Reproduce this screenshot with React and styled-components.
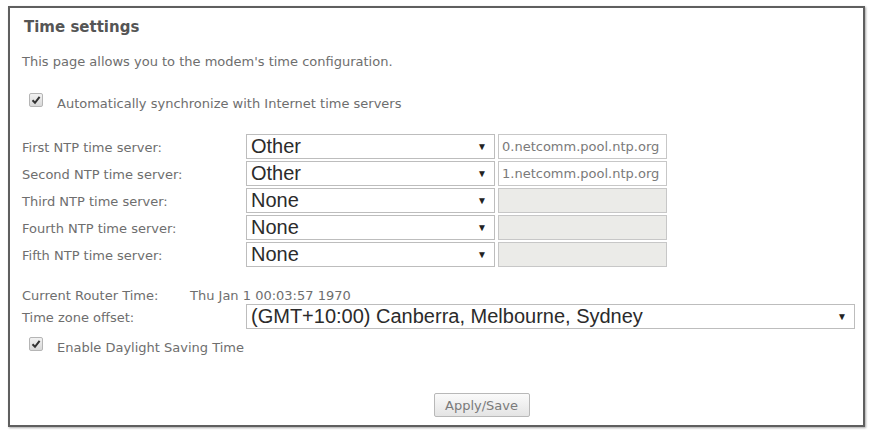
import styled, { createGlobalStyle } from 'styled-components';

const Global = createGlobalStyle`
  html, body { margin: 0; padding: 0; background: #fff; }
  body { font-family: Tahoma, "DejaVu Sans", sans-serif; }
`;

const Page = styled.div`
  width: 870px;
  height: 431px;
  padding: 6px 5px 4px 8px;
  box-sizing: border-box;
`;

const Frame = styled.div`
  height: 100%;
  box-sizing: border-box;
  border: 2px solid #5f5f5f;
  box-shadow: 1px 1px 2px rgba(0, 0, 0, 0.35);
  padding: 10px 8px 0 12px;
  display: flex;
  flex-direction: column;
  color: #6e6e6e;
  font-size: 13px;
`;

const Title = styled.div`
  font-weight: bold;
  font-size: 15px;
  color: #555;
  margin-left: 2px;
`;

const Desc = styled.div`
  margin-top: 18px;
`;

const CheckRow = styled.label`
  display: flex;
  align-items: center;
  gap: 14px;
  margin-left: 7px;
  margin-top: ${({ $top }) => $top}px;
`;

const Box = styled.span`
  width: 12px;
  height: 12px;
  border: 1px solid #b5b5b5;
  border-radius: 2px;
  background: linear-gradient(#f2f2f2, #d8d8d8);
  display: flex;
  align-items: center;
  justify-content: center;
  margin-top: -7px;
`;

const Servers = styled.div`
  margin-top: 23px;
  display: flex;
  flex-direction: column;
  gap: 2px;
`;

const Row = styled.div`
  display: grid;
  grid-template-columns: 221px 249px 169px;
  gap: 3px;
  align-items: center;
`;

const Label = styled.div`
  padding-top: 1px;
`;

const Select = styled.div`
  height: 25px;
  box-sizing: border-box;
  border: 1px solid #bdbdbd;
  background: #fff;
  display: flex;
  align-items: center;
  justify-content: space-between;
  padding: 0 7px 0 4px;
  font-family: "Liberation Sans", Arial, sans-serif;
  font-size: 20px;
  color: #2b2b2b;
`;

const Arrow = styled.span`
  font-size: 10px;
  color: #222;
`;

const TextBox = styled.div`
  height: 25px;
  box-sizing: border-box;
  border: 1px solid #c7c7c7;
  background: ${({ $disabled }) => ($disabled ? '#ebebe8' : '#fff')};
  display: flex;
  align-items: center;
  padding: 0 3px;
  font-size: 13px;
  color: #7a7a7a;
  white-space: nowrap;
  overflow: hidden;
`;

const TimeRow = styled.div`
  margin-top: 21px;
  display: flex;
`;

const TimeLabel = styled.div`
  width: 168px;
`;

const ZoneRow = styled.div`
  display: grid;
  grid-template-columns: 221px 609px;
  gap: 3px;
  align-items: center;
  margin-top: 1px;
`;

const Footer = styled.div`
  flex: 1;
  display: flex;
  justify-content: center;
  align-items: flex-end;
  padding: 0 0 8px 86px;
`;

const Button = styled.button`
  width: 96px;
  height: 24px;
  border: 1px solid #b8b8b8;
  border-radius: 2px;
  background: linear-gradient(#fafafa, #e4e4e4);
  color: #7a7a7a;
  font-family: Tahoma, "DejaVu Sans", sans-serif;
  font-size: 13px;
  padding: 0;
`;

const Check = () => (
  <Box>
    <svg width="10" height="10" viewBox="0 0 10 10">
      <path d="M1.5 5.2 L4 7.8 L8.6 1.8" fill="none" stroke="#333" strokeWidth="2" />
    </svg>
  </Box>
);

const servers = [
  ['First NTP time server:', 'Other', '0.netcomm.pool.ntp.org'],
  ['Second NTP time server:', 'Other', '1.netcomm.pool.ntp.org'],
  ['Third NTP time server:', 'None', null],
  ['Fourth NTP time server:', 'None', null],
  ['Fifth NTP time server:', 'None', null],
];

export default function App() {
  return (
    <>
      <Global />
      <Page>
        <Frame>
          <Title>Time settings</Title>
          <Desc>This page allows you to the modem's time configuration.</Desc>
          <CheckRow $top={27}>
            <Check />
            <span>Automatically synchronize with Internet time servers</span>
          </CheckRow>
          <Servers>
            {servers.map(([label, value, host]) => (
              <Row key={label}>
                <Label>{label}</Label>
                <Select>
                  {value}
                  <Arrow>▼</Arrow>
                </Select>
                <TextBox $disabled={!host}>{host}</TextBox>
              </Row>
            ))}
          </Servers>
          <TimeRow>
            <TimeLabel>Current Router Time:</TimeLabel>
            <span>Thu Jan 1 00:03:57 1970</span>
          </TimeRow>
          <ZoneRow>
            <Label>Time zone offset:</Label>
            <Select>
              (GMT+10:00) Canberra, Melbourne, Sydney
              <Arrow>▼</Arrow>
            </Select>
          </ZoneRow>
          <CheckRow $top={11}>
            <Check />
            <span>Enable Daylight Saving Time</span>
          </CheckRow>
          <Footer>
            <Button>Apply/Save</Button>
          </Footer>
        </Frame>
      </Page>
    </>
  );
}
